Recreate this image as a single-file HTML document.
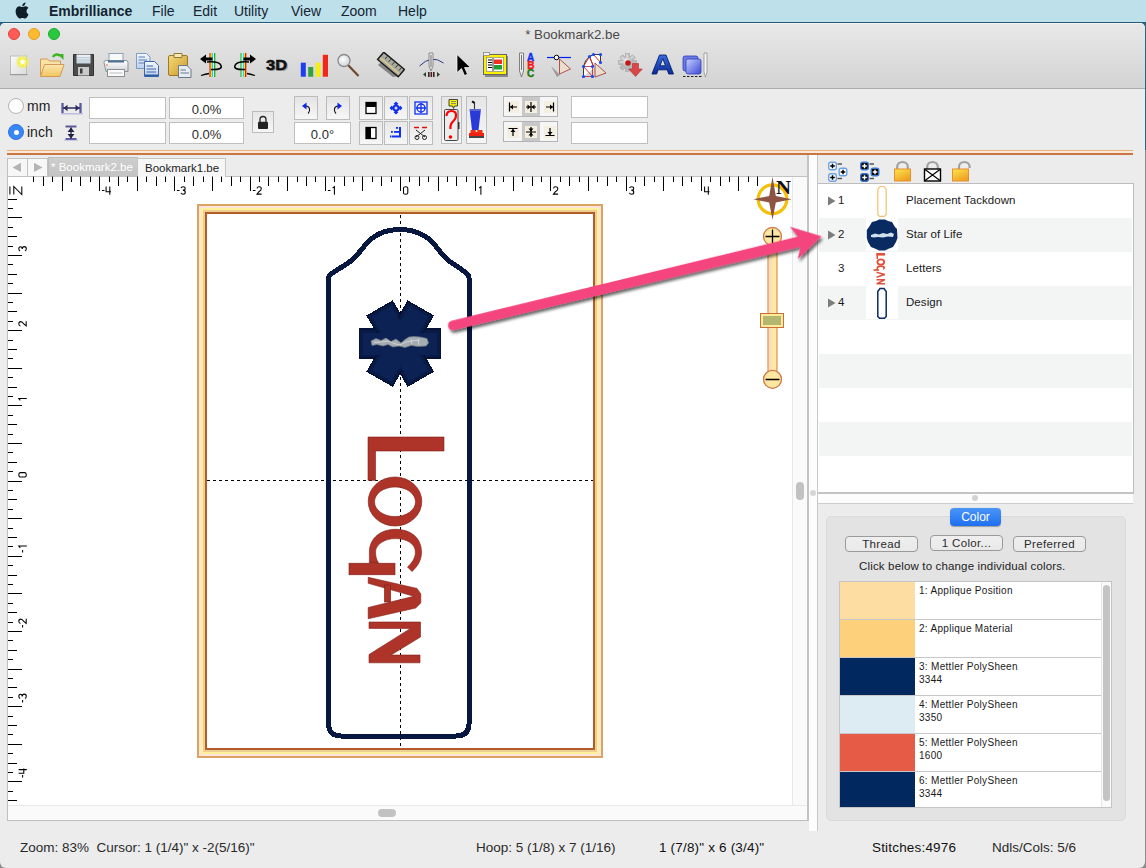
<!DOCTYPE html>
<html><head><meta charset="utf-8">
<style>
*{box-sizing:border-box}
html,body{margin:0;padding:0}
body{width:1146px;height:868px;position:relative;overflow:hidden;background:linear-gradient(#2a6585 0,#2a6585 150px,#8c8c8c 150px);font-family:"Liberation Sans", sans-serif;}
.a{position:absolute}
.t{position:absolute;white-space:nowrap}
.menubar{position:absolute;left:0;top:0;width:1146px;height:23px;background:#bde0eb;border-bottom:1px solid #235a76}
.menubar span{position:absolute;top:3px;font-size:14px;color:#142430}
.win{position:absolute;left:0;top:23px;width:1145px;height:845px;background:#ececec;border-radius:5px 5px 6px 6px;overflow:hidden}
.inp{position:absolute;background:#fff;border:1px solid #bfbfbf;font-size:14px;color:#2a2a2a;text-align:center;line-height:19px}
.btn{position:absolute;background:linear-gradient(#f8f8f8,#ececec);border:1px solid #bcbcbc}
.pbtn{position:absolute;height:16px;background:linear-gradient(#efefef,#e9e9e9);border:1px solid #9a9a9a;border-radius:4px;font-size:11.5px;letter-spacing:0.35px;color:#2a2a2a;text-align:center;line-height:15px}
</style></head><body>
<div class="menubar"><svg class="a" style="left:15px;top:2px" width="14" height="17" viewBox="0 0 14 17"><path fill="#0e1e28" d="M11.6 9.1c0-2.1 1.7-3.100 1.800-3.200-1-1.400-2.500-1.600-3-1.600-1.300-.1-2.500.8-3.100.8-.7 0-1.600-.8-2.700-.8C3.300 4.300 2 5.100 1.300 6.400c-1.400 2.500-.4 6.200 1 8.200.7 1 1.500 2.100 2.500 2 1-.04 1.400-.6 2.600-.6s1.500.6 2.600.6c1.100 0 1.700-1 2.400-2 .8-1.100 1.100-2.200 1.100-2.300-.03 0-2.100-.8-2.100-3.300zM9.600 3c.6-.7 1-1.600.9-2.600-.8.04-1.800.6-2.400 1.300-.5.600-1 1.500-.9 2.500 1 .08 1.800-.5 2.400-1.200z"/></svg><span style="left:49px;font-weight:bold;">Embrilliance</span><span style="left:152px;">File</span><span style="left:193px;">Edit</span><span style="left:234px;">Utility</span><span style="left:291px;">View</span><span style="left:341px;">Zoom</span><span style="left:398px;">Help</span></div><div class="win"><div class="a" style="left:0;top:0;width:1145px;height:66px;background:linear-gradient(#e8e8e8,#d3d3d3);border-bottom:1px solid #acacac;border-top:1px solid #f4f4f4"></div><div class="a" style="left:8px;top:5px;width:12px;height:12px;border-radius:50%;background:#fd5d56;border:1px solid #e0443e"></div><div class="a" style="left:28px;top:5px;width:12px;height:12px;border-radius:50%;background:#febb2f;border:1px solid #df9f26"></div><div class="a" style="left:48px;top:5px;width:12px;height:12px;border-radius:50%;background:#2bc83f;border:1px solid #1dab2b"></div><div class="t" style="left:0;width:1145px;text-align:center;top:4px;font-size:13.3px;color:#4a4a4a">* Bookmark2.be</div></div><svg class="a" style="left:8px;top:52px" width="24" height="26" viewBox="0 0 24 26"><defs><radialGradient id="glow"><stop offset="0" stop-color="#ffff40"/><stop offset="0.55" stop-color="#f4ec40" stop-opacity="0.95"/><stop offset="1" stop-color="#f0f080" stop-opacity="0"/></radialGradient>
<linearGradient id="docg" x1="0" y1="0" x2="1" y2="1"><stop offset="0" stop-color="#fafafa"/><stop offset="1" stop-color="#dcdcdc"/></linearGradient></defs>
<rect x="2.5" y="4" width="16" height="18.5" fill="url(#docg)" stroke="#bdbdbd" stroke-width="1"/>
<rect x="2" y="22" width="17.5" height="1.2" fill="#999"/>
<circle cx="14.6" cy="10" r="7.5" fill="url(#glow)"/>
<path d="M14.6 6.2l1.1 2.4 2.5.3-1.9 1.7.5 2.5-2.2-1.3-2.2 1.3.5-2.5-1.9-1.700 2.500-.3z" fill="#fff"/></svg><svg class="a" style="left:38px;top:51px" width="28" height="27" viewBox="0 0 28 27"><defs><linearGradient id="fold" x1="0" y1="0" x2="0" y2="1"><stop offset="0" stop-color="#fbe6ae"/><stop offset="1" stop-color="#f1c660"/></linearGradient></defs>
<path d="M2.5 8h7l2 2h11v14h-20z" fill="#f9e2a6" stroke="#d49a55" stroke-width="1"/>
<path d="M6.500 13.500h19.500l-4 12h-19.500z" fill="url(#fold)" stroke="#d49a55" stroke-width="1"/>
<path d="M15 6c1.500-3 5-3.500 7-1" fill="none" stroke="#3cb521" stroke-width="2.5"/>
<path d="M19.500 3h6v6z" fill="#3cb521"/></svg><svg class="a" style="left:72px;top:53px" width="24" height="24" viewBox="0 0 24 24"><defs><linearGradient id="flop" x1="0" y1="0" x2="0" y2="1"><stop offset="0" stop-color="#eef3f7"/><stop offset="1" stop-color="#c7d3dd"/></linearGradient></defs>
<path d="M1.5 1.500h20v21h-20z" fill="#4c4c4c" stroke="#303030" stroke-width="1"/>
<rect x="4.500" y="1.500" width="14" height="9" fill="url(#flop)"/>
<line x1="5" y1="4.500" x2="18" y2="4.500" stroke="#b8c6d2" stroke-width="0.8"/><line x1="5" y1="7" x2="18" y2="7" stroke="#b8c6d2" stroke-width="0.8"/>
<rect x="6" y="14" width="11" height="8.500" fill="#c9c9c9"/><rect x="8" y="15.500" width="2.500" height="5" fill="#3a3a3a"/></svg><svg class="a" style="left:102px;top:52px" width="28" height="26" viewBox="0 0 28 26"><defs><linearGradient id="prn" x1="0" y1="0" x2="0" y2="1"><stop offset="0" stop-color="#ffffff"/><stop offset="1" stop-color="#cfd3d6"/></linearGradient></defs>
<rect x="7" y="1.500" width="14" height="8" fill="#f6f8fa" stroke="#8ea2b4" stroke-width="1"/>
<path d="M2 10.500q0-2 2-2h20q2 0 2 2v9h-22z" fill="url(#prn)" stroke="#8a9096" stroke-width="1"/>
<rect x="6" y="8.500" width="16" height="2" fill="#4c6f94"/>
<rect x="5.500" y="17.500" width="17" height="7" fill="#fafafa" stroke="#8a9096" stroke-width="1"/>
<line x1="7.500" y1="21" x2="20.500" y2="21" stroke="#9aa" stroke-width="0.7"/><circle cx="5" cy="13" r="0.8" fill="#f06020"/></svg><svg class="a" style="left:135px;top:52px" width="27" height="26" viewBox="0 0 27 26"><defs><linearGradient id="cpy" x1="0" y1="0" x2="0" y2="1"><stop offset="0" stop-color="#f4f8fd"/><stop offset="1" stop-color="#bcd0ea"/></linearGradient></defs>
<path d="M1.500 1.500h10l3.500 3.500v11.500h-13.500z" fill="url(#cpy)" stroke="#7c9cc8" stroke-width="1"/>
<line x1="3.500" y1="5" x2="10" y2="5" stroke="#5a7fb5"/><line x1="3.500" y1="8" x2="12" y2="8" stroke="#5a7fb5"/><line x1="3.500" y1="11" x2="12" y2="11" stroke="#5a7fb5"/>
<path d="M9.500 9.500h10l4 4v11h-14z" fill="url(#cpy)" stroke="#3d68b0" stroke-width="1"/>
<line x1="11.500" y1="14" x2="18" y2="14" stroke="#3c65ad"/><line x1="11.500" y1="17" x2="21" y2="17" stroke="#3c65ad"/><line x1="11.500" y1="20" x2="21" y2="20" stroke="#3c65ad"/><rect x="9.500" y="22.500" width="14" height="2" fill="#2e5aa6"/></svg><svg class="a" style="left:167px;top:52px" width="27" height="26" viewBox="0 0 27 26"><defs><linearGradient id="clip" x1="0" y1="0" x2="1" y2="1"><stop offset="0" stop-color="#f7dc7a"/><stop offset="1" stop-color="#c8962a"/></linearGradient></defs>
<rect x="1.500" y="3.500" width="19" height="20" rx="1.500" fill="url(#clip)" stroke="#9c7a2a" stroke-width="1"/>
<path d="M7 1.500h8v4h-8z" fill="#f6eab0" stroke="#8e7a3a" stroke-width="1"/>
<path d="M11.500 13.500h8.500l4 4v8h-12.500z" fill="#e6ecf2" stroke="#6a7888" stroke-width="1"/>
<line x1="13.500" y1="18" x2="19" y2="18" stroke="#6a7a8a"/><line x1="13.500" y1="21" x2="22" y2="21" stroke="#6a7a8a"/></svg><svg class="a" style="left:199px;top:52px" width="26" height="26" viewBox="0 0 26 26"><rect x="10.500" y="1" width="1.200" height="24" fill="#e00"/><rect x="11.700" y="1" width="1.200" height="24" fill="#ee0"/><rect x="12.900" y="1" width="1.200" height="24" fill="#0dd"/><rect x="14.100" y="1" width="1" height="24" fill="#fff"/><rect x="15.100" y="1" width="1.200" height="24" fill="#1a1"/>
<path d="M1 7l6-4.500v3h6.500v3h-6.500v3z" fill="#000"/>
<path d="M8 10q12-1 14 3.500t-10 4" fill="none" stroke="#000" stroke-width="1.600"/>
<path d="M2 23.500q5-1.500 8-2" fill="none" stroke="#000" stroke-width="1.300"/></svg><svg class="a" style="left:231px;top:52px" width="26" height="26" viewBox="0 0 26 26"><rect x="9.500" y="1" width="1.200" height="24" fill="#1a1"/><rect x="10.700" y="1" width="1" height="24" fill="#fff"/><rect x="11.700" y="1" width="1.200" height="24" fill="#0dd"/><rect x="12.900" y="1" width="1.200" height="24" fill="#ee0"/><rect x="14.100" y="1" width="1.200" height="24" fill="#e00"/>
<path d="M25 7l-6-4.500v3h-6.500v3h6.500v3z" fill="#000"/>
<path d="M18 10q-12-1-14 3.500t10 4" fill="none" stroke="#000" stroke-width="1.600"/>
<path d="M24 23.500q-5-1.500-8-2" fill="none" stroke="#000" stroke-width="1.300"/></svg><svg class="a" style="left:264px;top:54px" width="28" height="20" viewBox="0 0 28 20"><text x="3.300" y="17.300" font-family="Liberation Sans" font-weight="bold" font-size="15" fill="#9a9a9a" textLength="21" lengthAdjust="spacingAndGlyphs">3D</text><text x="2" y="16" font-family="Liberation Sans" font-weight="bold" font-size="15" fill="#111" stroke="#111" stroke-width="0.500" textLength="21" lengthAdjust="spacingAndGlyphs">3D</text></svg><svg class="a" style="left:299px;top:53px" width="31" height="25" viewBox="0 0 31 25"><rect x="1.800" y="9.700" width="5" height="14" fill="#1e3ef0"/><rect x="9.200" y="14" width="5" height="9.700" fill="#33a040"/><rect x="16.600" y="9.700" width="5" height="14" fill="#f4ee10"/><rect x="23.800" y="1.800" width="5.200" height="21.900" fill="#f02818"/></svg><svg class="a" style="left:336px;top:52px" width="26" height="26" viewBox="0 0 26 26"><defs><radialGradient id="lens" cx="0.4" cy="0.4"><stop offset="0" stop-color="#fff"/><stop offset="1" stop-color="#d8dde0"/></radialGradient></defs>
<line x1="12" y1="13" x2="22.500" y2="24" stroke="#6a4a2a" stroke-width="2.200"/>
<circle cx="8" cy="8.500" r="6" fill="url(#lens)" stroke="#8a8a8a" stroke-width="1.300"/></svg><svg class="a" style="left:375px;top:52px" width="30" height="26" viewBox="0 0 30 26"><path d="M3 13 L7 9 L24 24 L18 25 Z" fill="#6a6a6a" opacity="0.75"/>
<g transform="translate(16,12.500) rotate(40)"><rect x="-13.500" y="-4.800" width="27" height="9.600" fill="#a9a9a0" stroke="#1a1a1a" stroke-width="1.400"/><line x1="-12.500" y1="1.800" x2="12.500" y2="1.800" stroke="#e0cc88" stroke-width="1.300"/>
<line x1="-8" y1="-4" x2="-8" y2="-0.500" stroke="#333" stroke-width="0.900"/><line x1="-3.500" y1="-4" x2="-3.500" y2="-0.500" stroke="#333" stroke-width="0.900"/><line x1="1" y1="-4" x2="1" y2="-0.500" stroke="#333" stroke-width="0.900"/><line x1="5.500" y1="-4" x2="5.500" y2="-0.500" stroke="#333" stroke-width="0.900"/><line x1="10" y1="-4" x2="10" y2="-0.500" stroke="#333" stroke-width="0.900"/></g></svg><svg class="a" style="left:418px;top:52px" width="27" height="26" viewBox="0 0 27 26"><path d="M1.500 14q12-12 24-3" fill="none" stroke="#2a3a8a" stroke-width="1"/>
<path d="M11 1v13l2 5 2-5v-13z" fill="#e8e8e8" stroke="#777" stroke-width="0.800"/><line x1="13" y1="3" x2="13" y2="15" stroke="#555" stroke-width="0.800"/>
<path d="M5 22.500l3-2.500v5z" fill="#234a23"/><path d="M22 22.500l-3-2.500v5z" fill="#234a23"/><rect x="10" y="20" width="1.600" height="5" fill="#4a2020"/><rect x="12.500" y="20" width="1.600" height="5" fill="#4a2020"/><rect x="15" y="20" width="1.600" height="5" fill="#4a2020"/></svg><svg class="a" style="left:455px;top:53px" width="17" height="24" viewBox="0 0 17 24"><path d="M2 1.500v18l4.500-4 3 7 3-1.300-3-6.700h6z" fill="#000" stroke="#fff" stroke-width="0.700"/></svg><svg class="a" style="left:482px;top:52px" width="27" height="26" viewBox="0 0 27 26"><rect x="3" y="4" width="23" height="21" fill="#888"/><rect x="1.500" y="2.500" width="23" height="20" fill="#fff000" stroke="#666" stroke-width="1"/><rect x="1.500" y="0.500" width="6" height="3" fill="#f4f4f4" stroke="#888" stroke-width="0.800"/>
<rect x="4.500" y="5.500" width="17" height="14" fill="#fff" stroke="#777" stroke-width="0.600"/><rect x="12" y="7.500" width="8" height="4.500" fill="#f03020"/><rect x="12" y="13" width="8" height="4.500" fill="#20a030"/>
<line x1="6" y1="8" x2="10" y2="8" stroke="#000"/><line x1="6" y1="10.500" x2="10" y2="10.500" stroke="#000"/><line x1="6" y1="13" x2="10" y2="13" stroke="#000"/><line x1="6" y1="15.500" x2="10" y2="15.500" stroke="#000"/><line x1="11" y1="6" x2="11" y2="19" stroke="#333"/></svg><svg class="a" style="left:517px;top:52px" width="21" height="26" viewBox="0 0 21 26"><path d="M2.500 1v18l2 6 2-6v-18z" fill="#eee" stroke="#666" stroke-width="0.800"/><line x1="4.500" y1="3" x2="4.500" y2="18" stroke="#555" stroke-width="0.800"/>
<text x="10" y="8.600" font-family="Liberation Sans" font-weight="bold" font-size="10" fill="#1030f0" stroke="#1030f0" stroke-width="0.400">A</text><text x="10.300" y="16.600" font-family="Liberation Sans" font-weight="bold" font-size="10" fill="#f01818" stroke="#f01818" stroke-width="0.400">B</text><text x="10" y="24.800" font-family="Liberation Sans" font-weight="bold" font-size="10" fill="#2a7a10" stroke="#2a7a10" stroke-width="0.400">C</text></svg><svg class="a" style="left:545px;top:52px" width="28" height="26" viewBox="0 0 28 26"><path d="M6 14l6 11 3-2z" fill="#999"/><line x1="2" y1="5.500" x2="26" y2="5.500" stroke="#0020f0" stroke-width="1.200"/><circle cx="11.500" cy="5.500" r="2.300" fill="#fff" stroke="#000" stroke-width="1"/>
<path d="M14.500 7l11 10-11 5z" fill="#eadfcc" stroke="#b04040" stroke-width="0.900"/></svg><svg class="a" style="left:581px;top:52px" width="28" height="26" viewBox="0 0 28 26"><path d="M2.500 24.500v-10q1-6 6-10l4-2h7v8" fill="#fff" stroke="#222" stroke-width="0.900"/>
<path d="M2.500 24.500h9v-10h-9" fill="none" stroke="#c02020" stroke-width="0.800"/><path d="M2.500 14.500l9 10M2.500 14.500l6-10 4 10M12.500 2.500l7 8M8.500 4.500l4 10" fill="none" stroke="#c02020" stroke-width="0.900"/>
<path d="M14 11l11 10-11 4z" fill="#eadfcc" stroke="#a04040" stroke-width="0.900"/>
<g fill="#1a4af0"><circle cx="2.500" cy="24.500" r="1.600"/><circle cx="11.500" cy="24.500" r="1.600"/><circle cx="2.500" cy="14.500" r="1.600"/><circle cx="11.500" cy="14.500" r="1.600"/><circle cx="8.500" cy="4.500" r="1.600"/><circle cx="12.500" cy="2.500" r="1.600"/><circle cx="19.500" cy="2.500" r="1.600"/><circle cx="19.500" cy="10.500" r="1.600"/></g></svg><svg class="a" style="left:618px;top:53px" width="26" height="24" viewBox="0 0 26 24"><defs><radialGradient id="gear" cx="0.400" cy="0.350"><stop offset="0" stop-color="#f4f4f4"/><stop offset="1" stop-color="#b8b8b8"/></radialGradient></defs><g transform="translate(9.500,9.500)"><g fill="url(#gear)" stroke="#a8a8a8" stroke-width="0.600"><circle r="6.500"/><rect x="-2" y="-9" width="4" height="18"/><rect x="-9" y="-2" width="18" height="4"/><rect x="-2" y="-9" width="4" height="18" transform="rotate(45)"/><rect x="-2" y="-9" width="4" height="18" transform="rotate(-45)"/></g><circle r="5.500" fill="url(#gear)"/><circle r="2.800" cx="0.500" cy="0.500" fill="#c01818"/></g>
<path d="M14.500 10.500h6v5.500h3.800l-6.800 7.500-6.800-7.500h3.800z" fill="#d84848" stroke="#b03030" stroke-width="0.600"/></svg><svg class="a" style="left:650px;top:53px" width="26" height="23" viewBox="0 0 26 23"><defs><linearGradient id="ag" x1="0" y1="0" x2="0" y2="1"><stop offset="0" stop-color="#3a6ae0"/><stop offset="1" stop-color="#0a2a98"/></linearGradient></defs><path d="M9.500 2h6.500l7.500 19h-4.800l-1.500-4.200h-9l-1.500 4.200h-4.800zM10 12.800h5.500l-2.700-7.300z" fill="url(#ag)" stroke="#06226a" stroke-width="0.900" fill-rule="evenodd"/></svg><svg class="a" style="left:681px;top:52px" width="28" height="26" viewBox="0 0 28 26"><defs><linearGradient id="bsq" x1="0" y1="0" x2="1" y2="1"><stop offset="0" stop-color="#c8d0ff"/><stop offset="1" stop-color="#3a4ad8"/></linearGradient></defs>
<rect x="2" y="4" width="15" height="15" rx="2" fill="#6a7ae8" stroke="#3040b0" stroke-width="0.800"/><rect x="5" y="7" width="15" height="15" rx="2" fill="url(#bsq)" stroke="#3040b0" stroke-width="0.800"/>
<line x1="2" y1="24.500" x2="21" y2="24.500" stroke="#222" stroke-width="1" stroke-dasharray="2.500 1.500"/>
<path d="M23 1v19l1.500 5 1.500-5v-19z" fill="#f4f4f4" stroke="#888" stroke-width="0.700"/></svg><div class="a" style="left:8px;top:98px;width:16px;height:16px;border-radius:50%;background:#fff;border:1px solid #b4b4b4"></div><div class="t" style="left:27px;top:98px;font-size:14px;color:#222">mm</div><div class="a" style="left:8px;top:124px;width:16px;height:16px;border-radius:50%;background:#3a86f6;border:1px solid #2f74e0"></div><div class="a" style="left:13.5px;top:129.5px;width:5px;height:5px;border-radius:50%;background:#fff"></div><div class="t" style="left:27px;top:124px;font-size:14px;color:#222">inch</div><svg class="a" style="left:60px;top:101px" width="23" height="14" viewBox="0 0 23 14"><path d="M2.500 2v10M20.500 2v10" stroke="#5a5a9a" stroke-width="2.300"/><path d="M3 7h17" stroke="#2c2c5a" stroke-width="1.500"/><path d="M3.500 7l4-3.200v6.400z M19.500 7l-4-3.200v6.400z" fill="#2c2c5a"/><path d="M1 12.800h22" stroke="#8a8ad0" stroke-width="1.200" opacity="0.6"/></svg><svg class="a" style="left:63px;top:125px" width="16" height="16" viewBox="0 0 16 16"><path d="M2.500 1.500h11M2.500 14h11" stroke="#5a5a9a" stroke-width="2"/><path d="M8 2.500v11" stroke="#222244" stroke-width="1.300"/><path d="M8 2.500l-3.500 4.500h7z M8 13.500l-3.500-4.500h7z" fill="#222244"/><path d="M1 15.200h14" stroke="#9a9ad8" stroke-width="1" opacity="0.6"/></svg><div class="inp" style="left:89px;top:97px;width:77px;height:22px"></div><div class="inp" style="left:89px;top:122px;width:77px;height:22px"></div><div class="inp" style="left:169px;top:97px;width:75px;height:22px"></div><div class="inp" style="left:169px;top:122px;width:75px;height:22px"></div><div class="t" style="left:169px;top:102px;width:75px;text-align:center;font-size:13px;color:#2b2b2b">0.0%</div><div class="t" style="left:169px;top:127px;width:75px;text-align:center;font-size:13px;color:#2b2b2b">0.0%</div><div class="btn" style="left:252px;top:111px;width:22px;height:22px;background:linear-gradient(#e6e6e6,#f6f6f6)"></div><svg class="a" style="left:256px;top:113px" width="14" height="18" viewBox="0 0 14 18"><path d="M4 9V6.500a3 3 0 0 1 6 0V9" fill="none" stroke="#222" stroke-width="1.300"/><rect x="2" y="8.700" width="10" height="7.300" rx="1" fill="#222"/></svg><div class="btn" style="left:294px;top:96px;width:24px;height:24px;background:linear-gradient(#e4e4e4,#f7f7f7)"></div><div class="btn" style="left:326px;top:96px;width:24px;height:24px;background:linear-gradient(#e4e4e4,#f7f7f7)"></div><svg class="a" style="left:300px;top:100px" width="12" height="16" viewBox="0 0 12 16"><path d="M2 6 L6.500 2.500 V9.500z" fill="#0a28f0"/><path d="M6 6q4 .5 3.500 4.500q-.3 1.800-1.500 3" fill="none" stroke="#111" stroke-width="1.100"/></svg><svg class="a" style="left:332px;top:100px" width="12" height="16" viewBox="0 0 12 16"><path d="M10 6 L5.500 2.500 V9.500z" fill="#0a28f0"/><path d="M6 6q-4 .5-3.500 4.500q.3 1.800 1.500 3" fill="none" stroke="#111" stroke-width="1.100"/></svg><div class="inp" style="left:294px;top:122px;width:57px;height:22px"></div><div class="t" style="left:294px;top:127px;width:57px;text-align:center;font-size:13px;color:#2b2b2b">0.0°</div><div class="btn" style="left:359px;top:96px;width:24px;height:24px;background:linear-gradient(#e8e8e8,#f6f6f6)"></div><div class="btn" style="left:359px;top:121px;width:24px;height:24px;background:linear-gradient(#e8e8e8,#f6f6f6)"></div><div class="btn" style="left:384px;top:96px;width:24px;height:24px;background:linear-gradient(#e8e8e8,#f6f6f6)"></div><div class="btn" style="left:384px;top:121px;width:24px;height:24px;background:linear-gradient(#e8e8e8,#f6f6f6)"></div><div class="btn" style="left:409px;top:96px;width:24px;height:24px;background:linear-gradient(#e8e8e8,#f6f6f6)"></div><div class="btn" style="left:409px;top:121px;width:24px;height:24px;background:linear-gradient(#e8e8e8,#f6f6f6)"></div><svg class="a" style="left:359px;top:96px" width="24" height="24" viewBox="0 0 24 24"><rect x="7" y="6.500" width="10" height="11" fill="#fff" stroke="#000" stroke-width="1.300"/><rect x="7" y="6.500" width="10" height="4.500" fill="#000"/></svg><svg class="a" style="left:359px;top:121px" width="24" height="24" viewBox="0 0 24 24"><rect x="7" y="6.500" width="10" height="11" fill="#fff" stroke="#000" stroke-width="1.300"/><rect x="7" y="6.500" width="5" height="11" fill="#000"/></svg><svg class="a" style="left:384px;top:96px" width="24" height="24" viewBox="0 0 24 24"><g fill="#1030f0"><circle cx="12" cy="12" r="3.500"/><path d="M12 5.500l-2.500 2.500h5z M12 18.500l-2.500-2.500h5z M5.500 12l2.500-2.500v5z M18.500 12l-2.500-2.500v5z"/><rect x="10.500" y="7" width="3" height="10"/><rect x="7" y="10.500" width="10" height="3"/></g><circle cx="12" cy="12" r="1.500" fill="#dde"/></svg><svg class="a" style="left:384px;top:121px" width="24" height="24" viewBox="0 0 24 24"><g fill="#1030f0"><rect x="15" y="6" width="2" height="10"/><rect x="8" y="14.500" width="9" height="2"/><rect x="10" y="10" width="5" height="1.800"/><rect x="6" y="14.500" width="1.500" height="2"/><rect x="7" y="10" width="1.800" height="1.800"/><rect x="12" y="6" width="2" height="1.800"/></g></svg><svg class="a" style="left:409px;top:96px" width="24" height="24" viewBox="0 0 24 24"><rect x="6" y="6" width="12" height="12" fill="none" stroke="#1030f0" stroke-width="1.300"/><circle cx="12" cy="12" r="4" fill="none" stroke="#1030f0" stroke-width="1.300"/><path d="M12 7v10M7 12h10" stroke="#1030f0" stroke-width="1.300"/></svg><svg class="a" style="left:409px;top:121px" width="24" height="24" viewBox="0 0 24 24"><path d="M5 6.500h5M13 6.500h5" stroke="#e01010" stroke-width="1.500"/><path d="M7 9l9 7M16 9l-9 7" stroke="#222" stroke-width="1"/><circle cx="8" cy="16.500" r="2" fill="none" stroke="#222" stroke-width="1"/><circle cx="15.500" cy="16.500" r="2" fill="none" stroke="#222" stroke-width="1"/></svg><div class="btn" style="left:441px;top:96px;width:21px;height:48px;background:linear-gradient(#e6e6e6,#f6f6f6)"></div><div class="btn" style="left:466px;top:96px;width:21px;height:48px;background:linear-gradient(#e6e6e6,#f6f6f6)"></div><svg class="a" style="left:441px;top:96px" width="21" height="48" viewBox="0 0 21 48"><rect x="3.500" y="13.500" width="13.500" height="31" rx="1.200" fill="#ececec" stroke="#444" stroke-width="1"/><rect x="17" y="26" width="1.500" height="7" fill="#333"/><path d="M8 3.500h8.500v6.500h-3l-1 2.500-1-2.500h-3.500z" fill="#f4f000" stroke="#333" stroke-width="0.900"/><path d="M10 5.500h5M10 7.500h5" stroke="#777" stroke-width="0.800"/><path d="M5.500 20q0-5 5-5t4.500 5q0 3-3 5.500t-2.500 7.500" fill="none" stroke="#f00" stroke-width="2.200"/><circle cx="9.500" cy="41" r="1.800" fill="#f00"/></svg><svg class="a" style="left:466px;top:96px" width="21" height="48" viewBox="0 0 21 48"><path d="M6.500 5l2 1.500v28" fill="none" stroke="#333" stroke-width="1.100"/><path d="M6 5.500l2.500 1.500" stroke="#111" stroke-width="2"/><path d="M3.500 13h11.500l-2.500 21h-6.500z" fill="#2a3ad8"/><path d="M4 14h11" stroke="#bbb" stroke-width="0.700"/><rect x="4.500" y="34" width="12" height="3" fill="#f03010"/><rect x="3" y="37" width="15" height="3" fill="#f02010"/><rect x="3" y="40" width="15" height="2" fill="#444"/><circle cx="10.500" cy="35" r="1" fill="#fff"/></svg><div class="a" style="left:503px;top:96px;width:55px;height:21px;border:1px solid #b4b4b4;background:#f6f6f6"></div><div class="a" style="left:522px;top:97px;width:18px;height:19px;background:#c8c8c8"></div><div class="a" style="left:503px;top:121px;width:55px;height:21px;border:1px solid #b4b4b4;background:#f6f6f6"></div><div class="a" style="left:522px;top:122px;width:18px;height:19px;background:#c8c8c8"></div><svg class="a" style="left:507px;top:101px" width="12" height="12" viewBox="0 0 12 12"><rect x="0" y="0" width="12" height="12" fill="#f4efe0"/><path d="M2.500 1.500v9M3 6h7" stroke="#000" stroke-width="1.200"/><path d="M3 6l3-2.500v5z" fill="#000"/></svg><svg class="a" style="left:525px;top:101px" width="12" height="12" viewBox="0 0 12 12"><rect x="0" y="0" width="12" height="12" fill="#f4efe0"/><path d="M6 1v10M1 6h10" stroke="#000" stroke-width="1.200"/><path d="M5.500 6l-3-2.500v5zM6.500 6l3-2.500v5z" fill="#000"/></svg><svg class="a" style="left:544px;top:101px" width="12" height="12" viewBox="0 0 12 12"><rect x="0" y="0" width="12" height="12" fill="#f4efe0"/><path d="M9.500 1.500v9M2 6h7" stroke="#000" stroke-width="1.200"/><path d="M9 6l-3-2.500v5z" fill="#000"/></svg><svg class="a" style="left:507px;top:126px" width="12" height="12" viewBox="0 0 12 12"><rect x="0" y="0" width="12" height="12" fill="#f4efe0"/><path d="M1.500 2.500h9M6 3v7" stroke="#000" stroke-width="1.200"/><path d="M6 3l-2.500 3h5z" fill="#000"/></svg><svg class="a" style="left:525px;top:126px" width="12" height="12" viewBox="0 0 12 12"><rect x="0" y="0" width="12" height="12" fill="#f4efe0"/><path d="M1 6h10M6 1v10" stroke="#000" stroke-width="1.200"/><path d="M6 5.500l-2.500-3h5zM6 6.500l-2.500 3h5z" fill="#000"/></svg><svg class="a" style="left:544px;top:126px" width="12" height="12" viewBox="0 0 12 12"><rect x="0" y="0" width="12" height="12" fill="#f4efe0"/><path d="M1.500 9.500h9M6 2v7" stroke="#000" stroke-width="1.200"/><path d="M6 9l-2.500-3h5z" fill="#000"/></svg><div class="inp" style="left:571px;top:96px;width:77px;height:22px"></div><div class="inp" style="left:571px;top:122px;width:77px;height:22px"></div><div class="a" style="left:7px;top:150px;width:1126px;height:5px;background:linear-gradient(#e9b27a 0,#e9b27a 1.5px,#fde8d8 1.5px,#fde8d8 3px,#c97645 3px,#c97645 5px)"></div><div class="a" style="left:7px;top:176px;width:802px;height:645px;border:1px solid #bfbfbf;border-right:2px solid #c4c4c4;background:#fff"></div><div class="a" style="left:807px;top:155px;width:2px;height:22px;background:#c4c4c4"></div><div class="a" style="left:7px;top:176px;width:802px;height:1px;background:#c2c2c2"></div><div class="a" style="left:7px;top:158px;width:21px;height:19px;background:#f7f7f7;border:1px solid #c2c2c2"></div><div class="a" style="left:27px;top:158px;width:21px;height:19px;background:#f7f7f7;border:1px solid #c2c2c2"></div><svg class="a" style="left:7px;top:158px" width="41" height="19" viewBox="0 0 41 19"><path d="M5.500 9.400l8.500-4.600v9.200z" fill="#b4b4b4"/><path d="M35.500 9.400l-8.500-4.600v9.200z" fill="#b4b4b4"/></svg><div class="a" style="left:48px;top:157px;width:90px;height:20px;background:linear-gradient(#cecece,#c3c3c3);border:1px solid #bcbcbc;border-bottom:none"></div><div class="t" style="left:51px;top:161px;font-size:11.5px;color:#fff">* Bookmark2.be</div><div class="a" style="left:137px;top:158px;width:89px;height:19px;background:#f6f6f6;border:1px solid #c6c6c6;border-bottom:none"></div><div class="t" style="left:145px;top:162px;font-size:11.5px;color:#222">Bookmark1.be</div><div class="a" style="left:792px;top:177px;width:15px;height:628px;background:#fafafa;border-left:1px solid #e8e8e8"></div><div class="a" style="left:796px;top:482px;width:8px;height:18px;border-radius:4px;background:#c2c2c2"></div><div class="a" style="left:8px;top:805px;width:799px;height:15px;background:#fafafa;border-top:1px solid #e8e8e8"></div><div class="a" style="left:378px;top:809px;width:18px;height:8px;border-radius:4px;background:#c2c2c2"></div><svg width="786" height="21" style="position:absolute;left:7px;top:176px" viewBox="7 176 786 21"><g fill="none" stroke="#000" stroke-width="1.050"><path d="M33.5 176.500 V182"/><path d="M43.5 176.500 V186"/><path d="M52.5 176.500 V182"/><path d="M62.5 176.500 V191"/><path d="M71.5 176.500 V182"/><path d="M80.5 176.500 V186"/><path d="M90.5 176.500 V182"/><path d="M99.5 176.500 V191"/><g transform="translate(101.9,186.200)"><path transform="translate(0,0)" d="M0 4.300 H2.600"/><path transform="translate(3.5,0)" d="M0.700 0.300 V5.500 H5.600 M4.400 0.300 V8.500"/></g><path d="M109.5 176.500 V182"/><path d="M118.5 176.500 V186"/><path d="M127.5 176.500 V182"/><path d="M137.5 176.500 V191"/><path d="M146.5 176.500 V182"/><path d="M156.5 176.500 V186"/><path d="M165.5 176.500 V182"/><path d="M174.5 176.500 V191"/><g transform="translate(176.9,186.200)"><path transform="translate(0,0)" d="M0 4.300 H2.600"/><path transform="translate(3.5,0)" d="M0.600 1.800 Q1 0.500 2.700 0.500 Q4.800 0.500 4.800 2.200 Q4.800 3.900 2.400 3.900 Q4.900 3.900 4.900 6 Q4.900 8 2.700 8 Q0.900 8 0.500 6.600"/></g><path d="M184.5 176.500 V182"/><path d="M193.5 176.500 V186"/><path d="M203.5 176.500 V182"/><path d="M212.5 176.500 V191"/><path d="M221.5 176.500 V182"/><path d="M231.5 176.500 V186"/><path d="M240.5 176.500 V182"/><path d="M250.5 176.500 V191"/><g transform="translate(252.9,186.200)"><path transform="translate(0,0)" d="M0 4.300 H2.600"/><path transform="translate(3.5,0)" d="M0.600 2.200 Q0.800 0.500 2.750 0.500 Q4.900 0.500 4.900 2.500 Q4.900 4 2.500 5.500 L0.600 7.900 H5.200"/></g><path d="M259.5 176.500 V182"/><path d="M268.5 176.500 V186"/><path d="M278.5 176.500 V182"/><path d="M287.5 176.500 V191"/><path d="M297.5 176.500 V182"/><path d="M306.5 176.500 V186"/><path d="M315.5 176.500 V182"/><path d="M325.5 176.500 V191"/><g transform="translate(327.9,186.200)"><path transform="translate(0,0)" d="M0 4.300 H2.600"/><path transform="translate(3.5,0)" d="M1.200 2 L3 0.500 V8.500"/></g><path d="M334.5 176.500 V182"/><path d="M344.5 176.500 V186"/><path d="M353.5 176.500 V182"/><path d="M362.5 176.500 V191"/><path d="M372.5 176.500 V182"/><path d="M381.5 176.500 V186"/><path d="M391.5 176.500 V182"/><path d="M400.5 176.500 V191"/><g transform="translate(402.9,186.200)"><path transform="translate(0,0)" d="M0.600 2 Q0.600 0.500 2.750 0.500 Q4.900 0.500 4.900 2 V6.500 Q4.900 8 2.750 8 Q0.600 8 0.600 6.500 Z"/></g><path d="M409.5 176.500 V182"/><path d="M419.5 176.500 V186"/><path d="M428.5 176.500 V182"/><path d="M438.5 176.500 V191"/><path d="M447.5 176.500 V182"/><path d="M456.5 176.500 V186"/><path d="M466.5 176.500 V182"/><path d="M475.5 176.500 V191"/><g transform="translate(477.9,186.200)"><path transform="translate(0,0)" d="M1.200 2 L3 0.500 V8.500"/></g><path d="M485.5 176.500 V182"/><path d="M494.5 176.500 V186"/><path d="M503.5 176.500 V182"/><path d="M513.5 176.500 V191"/><path d="M522.5 176.500 V182"/><path d="M532.5 176.500 V186"/><path d="M541.5 176.500 V182"/><path d="M550.5 176.500 V191"/><g transform="translate(552.9,186.200)"><path transform="translate(0,0)" d="M0.600 2.200 Q0.800 0.500 2.750 0.500 Q4.900 0.500 4.900 2.500 Q4.900 4 2.500 5.500 L0.600 7.900 H5.200"/></g><path d="M560.5 176.500 V182"/><path d="M569.5 176.500 V186"/><path d="M579.5 176.500 V182"/><path d="M588.5 176.500 V191"/><path d="M597.5 176.500 V182"/><path d="M607.5 176.500 V186"/><path d="M616.5 176.500 V182"/><path d="M626.5 176.500 V191"/><g transform="translate(628.9,186.200)"><path transform="translate(0,0)" d="M0.600 1.800 Q1 0.500 2.700 0.500 Q4.800 0.500 4.800 2.200 Q4.800 3.900 2.400 3.900 Q4.900 3.900 4.900 6 Q4.900 8 2.700 8 Q0.900 8 0.500 6.600"/></g><path d="M635.5 176.500 V182"/><path d="M644.5 176.500 V186"/><path d="M654.5 176.500 V182"/><path d="M663.5 176.500 V191"/><path d="M673.5 176.500 V182"/><path d="M682.5 176.500 V186"/><path d="M691.5 176.500 V182"/><path d="M701.5 176.500 V191"/><g transform="translate(703.9,186.200)"><path transform="translate(0,0)" d="M0.700 0.300 V5.500 H5.600 M4.400 0.300 V8.500"/></g><path d="M710.5 176.500 V182"/><path d="M720.5 176.500 V186"/><path d="M729.5 176.500 V182"/><path d="M738.5 176.500 V191"/><path d="M748.5 176.500 V182"/><path d="M757.5 176.500 V186"/><path d="M9.900 186.500 V194.500 M13.800 194.500 V186.500 L21.800 194.500 V186.500"/></g></svg><svg width="24" height="608" style="position:absolute;left:7px;top:197px" viewBox="7 197 24 608"><g fill="none" stroke="#000" stroke-width="1.050"><path d="M8 800.5 H17"/><path d="M8 791.5 H13"/><path d="M8 781.5 H22"/><g transform="translate(18.300,777.5) rotate(-90)"><path transform="translate(0,0)" d="M0 4.300 H2.600"/><path transform="translate(3.5,0)" d="M0.700 0.300 V5.500 H5.600 M4.400 0.300 V8.500"/></g><path d="M8 772.5 H13"/><path d="M8 763.5 H17"/><path d="M8 753.5 H13"/><path d="M8 744.5 H22"/><path d="M8 734.5 H13"/><path d="M8 725.5 H17"/><path d="M8 716.5 H13"/><path d="M8 706.5 H22"/><g transform="translate(18.300,702.5) rotate(-90)"><path transform="translate(0,0)" d="M0 4.300 H2.600"/><path transform="translate(3.5,0)" d="M0.600 1.800 Q1 0.500 2.700 0.500 Q4.800 0.500 4.800 2.200 Q4.800 3.900 2.400 3.900 Q4.900 3.900 4.900 6 Q4.900 8 2.700 8 Q0.900 8 0.500 6.600"/></g><path d="M8 697.5 H13"/><path d="M8 687.5 H17"/><path d="M8 678.5 H13"/><path d="M8 669.5 H22"/><path d="M8 659.5 H13"/><path d="M8 650.5 H17"/><path d="M8 640.5 H13"/><path d="M8 631.5 H22"/><g transform="translate(18.300,627.5) rotate(-90)"><path transform="translate(0,0)" d="M0 4.300 H2.600"/><path transform="translate(3.5,0)" d="M0.600 2.200 Q0.800 0.500 2.750 0.500 Q4.900 0.500 4.900 2.500 Q4.900 4 2.500 5.500 L0.600 7.900 H5.200"/></g><path d="M8 622.5 H13"/><path d="M8 612.5 H17"/><path d="M8 603.5 H13"/><path d="M8 593.5 H22"/><path d="M8 584.5 H13"/><path d="M8 575.5 H17"/><path d="M8 565.5 H13"/><path d="M8 556.5 H22"/><g transform="translate(18.300,552.5) rotate(-90)"><path transform="translate(0,0)" d="M0 4.300 H2.600"/><path transform="translate(3.5,0)" d="M1.200 2 L3 0.500 V8.500"/></g><path d="M8 546.5 H13"/><path d="M8 537.5 H17"/><path d="M8 528.5 H13"/><path d="M8 518.5 H22"/><path d="M8 509.5 H13"/><path d="M8 499.5 H17"/><path d="M8 490.5 H13"/><path d="M8 481.5 H22"/><g transform="translate(18.300,477.5) rotate(-90)"><path transform="translate(0,0)" d="M0.600 2 Q0.600 0.500 2.750 0.500 Q4.900 0.500 4.900 2 V6.500 Q4.900 8 2.750 8 Q0.600 8 0.600 6.500 Z"/></g><path d="M8 471.5 H13"/><path d="M8 462.5 H17"/><path d="M8 452.5 H13"/><path d="M8 443.5 H22"/><path d="M8 434.5 H13"/><path d="M8 424.5 H17"/><path d="M8 415.5 H13"/><path d="M8 405.5 H22"/><g transform="translate(18.300,401.5) rotate(-90)"><path transform="translate(0,0)" d="M1.200 2 L3 0.500 V8.500"/></g><path d="M8 396.5 H13"/><path d="M8 387.5 H17"/><path d="M8 377.5 H13"/><path d="M8 368.5 H22"/><path d="M8 358.5 H13"/><path d="M8 349.5 H17"/><path d="M8 340.5 H13"/><path d="M8 330.5 H22"/><g transform="translate(18.300,326.5) rotate(-90)"><path transform="translate(0,0)" d="M0.600 2.200 Q0.800 0.500 2.750 0.500 Q4.900 0.500 4.900 2.500 Q4.900 4 2.500 5.500 L0.600 7.900 H5.200"/></g><path d="M8 321.5 H13"/><path d="M8 311.5 H17"/><path d="M8 302.5 H13"/><path d="M8 293.5 H22"/><path d="M8 283.5 H13"/><path d="M8 274.5 H17"/><path d="M8 264.5 H13"/><path d="M8 255.5 H22"/><g transform="translate(18.300,251.5) rotate(-90)"><path transform="translate(0,0)" d="M0.600 1.800 Q1 0.500 2.700 0.500 Q4.800 0.500 4.800 2.200 Q4.800 3.900 2.400 3.900 Q4.900 3.900 4.900 6 Q4.900 8 2.700 8 Q0.900 8 0.500 6.600"/></g><path d="M8 246.5 H13"/><path d="M8 236.5 H17"/><path d="M8 227.5 H13"/><path d="M8 217.5 H22"/><path d="M8 208.5 H13"/><path d="M8 199.5 H17"/></g></svg><div class="a" style="left:809px;top:155px;width:9px;height:676px;background:#fdfdfd;border-right:1px solid #c8c8c8"></div><div class="a" style="left:810px;top:490px;width:6px;height:6px;border-radius:50%;background:#d6d6d6"></div><div class="a" style="left:197px;top:204px;width:406px;height:554px;border:2px solid #d9a462"></div><div class="a" style="left:199px;top:206px;width:402px;height:550px;border:2px solid #ffe4d9"></div><div class="a" style="left:201px;top:208px;width:398px;height:546px;border:2px solid #fff19c"></div><div class="a" style="left:203px;top:210px;width:394px;height:542px;border:2px solid #eccf92"></div><div class="a" style="left:205px;top:212px;width:390px;height:538px;border:2px solid #b55a2b"></div><svg class="a" style="left:0;top:0" width="1146" height="868" viewBox="0 0 1146 868"><line x1="400.5" y1="215" x2="400.5" y2="748" stroke="#000" stroke-width="1" stroke-dasharray="3 3"/><line x1="207" y1="480.5" x2="593" y2="480.5" stroke="#000" stroke-width="1" stroke-dasharray="3 3"/><path d="M328.400 723 V278.500 Q328.400 275.500 331.300 273.700 C337 270 342 267 348 263 C356 258 360 251 366 244 C374 235 386 229.500 399.800 229.500 C414 229.500 426 235 434 244 C440 251 444 258 452 263 C458 267 463 270 466.500 273.700 Q469.050 275.500 469.050 278.500 V723 Q469.050 736 456 736 H341.400 Q328.400 736 328.400 723 Z" fill="none" stroke="#071740" stroke-width="5" stroke-linejoin="round" shape-rendering="crispEdges"/><g fill="#081b47" stroke="#051236" stroke-width="1.500" shape-rendering="crispEdges"><rect x="-40.500" y="-14.500" width="81" height="29" transform="translate(400.2,343.6) rotate(0)"/><rect x="-40.500" y="-14.500" width="81" height="29" transform="translate(400.2,343.6) rotate(60)"/><rect x="-40.500" y="-14.500" width="81" height="29" transform="translate(400.2,343.6) rotate(120)"/></g><g fill="#0c2154" shape-rendering="crispEdges"><rect x="-37" y="-11" width="74" height="22" transform="translate(400.2,343.6) rotate(0)"/><rect x="-37" y="-11" width="74" height="22" transform="translate(400.2,343.6) rotate(60)"/><rect x="-37" y="-11" width="74" height="22" transform="translate(400.2,343.6) rotate(120)"/></g><path d="M371 341 L376 338.500 L381 340.500 L386 338 L391 341.500 L396 339 L401 343 L405 339.500 L409 337 L414 336.500 L420 337 L427 338.500 L428.500 343 L426 346 L418 346.500 L411 345.500 L405 347.500 L399 346 L393 347 L388 344.500 L383 346 L377 344.500 L372 345.500 Z" fill="#a4acb1" stroke="#6f787e" stroke-width="0.700"/><path d="M374 342.500 L381 342 L388 341 L394 343.500 L400 345 L406 342 L412 341 L420 340 M411 339 L412 344 M418 339 L419 345" fill="none" stroke="#d0d6da" stroke-width="0.900"/><g fill="#ae3329" stroke="#7e2118" stroke-width="0.600"><path d="M368 437 H444 V451 H375.500 V480.300 H368 Z"/><path fill-rule="evenodd" d="M368.200 501.500 A26.800 24.500 0 1 0 421.800 501.500 A26.800 24.500 0 1 0 368.200 501.500 Z M374.500 501.800 A20.500 14.800 0 1 0 415.500 501.800 A20.500 14.800 0 1 0 374.500 501.800 Z"/><path d="M369.400 563 V552 C369.400 538 381 529.300 395.500 529.300 C411 529.300 421.500 538 421.500 552 C421.500 560 418 566 412 571.500 L407.500 567 C412 563 415.400 558 415.400 552 C415.400 544 407 538.600 395.500 538.600 C384 538.600 375.500 545 375.500 552 C375.500 556 376.500 560 378.500 563 Z"/><rect x="349" y="563.200" width="46" height="11.600"/><path d="M368.200 577.300 L417 588.400 L420.800 594 V603 L415.700 608 L368.200 618.800 V607.500 L413.800 596.300 L368.200 583.300 Z"/><rect x="384.400" y="585" width="6.300" height="17"/><path d="M369 622 H420.500 V637 L391 655 H420 V662.800 H369 V654.500 L410.500 628.400 H369 Z"/></g><circle cx="772.500" cy="199.200" r="14.300" fill="none" stroke="#f4c00a" stroke-width="3.300"/><path d="M772.500 176.700 L775.800 195.900 L791.700 199.200 L775.800 202.500 L772.500 219.700 L769.200 202.500 L753.300 199.200 L769.200 195.900 Z" fill="#8e5443"/><text x="776" y="193.800" font-family="Liberation Serif" font-weight="bold" font-size="19" fill="#111" textLength="15" lengthAdjust="spacingAndGlyphs">N</text><rect x="768" y="244" width="9" height="128" fill="#fde9a4" stroke="#d8925a" stroke-width="1.200"/><rect x="769.500" y="245" width="2" height="126" fill="#fbd6c8"/><circle cx="772.500" cy="236.500" r="9" fill="#fde6a0" stroke="#c97a4a" stroke-width="1.300"/><path d="M765.500 236.500h14M772.500 229.500v14" stroke="#000" stroke-width="1.300"/><circle cx="772.500" cy="379.300" r="9" fill="#fde6a0" stroke="#c97a4a" stroke-width="1.300"/><path d="M765.500 379.500h14" stroke="#000" stroke-width="1.500"/><rect x="760.500" y="313.500" width="23" height="14" fill="#fdeb9a" stroke="#c87038" stroke-width="1"/><rect x="763" y="316" width="18" height="9" fill="#b3b66e"/></svg><svg class="a" style="left:827px;top:161px" width="22" height="21" viewBox="0 0 22 21"><rect x="1.7" y="1.2" width="7.600" height="7.600" rx="2" fill="#fff" stroke="#6aa2e6" stroke-width="1.400"/><path d="M5.5 2.7v4.600M3.2 5.0h4.600" stroke="#000" stroke-width="1.500"/><rect x="1.7" y="12.7" width="7.600" height="7.600" rx="2" fill="#fff" stroke="#6aa2e6" stroke-width="1.400"/><path d="M5.5 14.2v4.600M3.2 16.5h4.600" stroke="#000" stroke-width="1.500"/><rect x="12.2" y="7.2" width="7.600" height="7.600" rx="2" fill="#fff" stroke="#6aa2e6" stroke-width="1.400"/><path d="M16.0 8.7v4.600M13.7 11.0h4.600" stroke="#000" stroke-width="1.500"/><path d="M10.500 3h4.500M10.500 17.500h4.500" stroke="#555" stroke-width="1.500"/></svg><svg class="a" style="left:859px;top:161px" width="22" height="21" viewBox="0 0 22 21"><rect x="1.7" y="1.2" width="7.600" height="7.600" rx="2" fill="#000" stroke="#3a78d0" stroke-width="1.400"/><path d="M5.5 2.7v4.600M3.2 5.0h4.600" stroke="#fff" stroke-width="1.500"/><rect x="1.7" y="12.7" width="7.600" height="7.600" rx="2" fill="#000" stroke="#3a78d0" stroke-width="1.400"/><path d="M5.5 14.2v4.600M3.2 16.5h4.600" stroke="#fff" stroke-width="1.500"/><rect x="12.2" y="7.2" width="7.600" height="7.600" rx="2" fill="#000" stroke="#3a78d0" stroke-width="1.400"/><path d="M16.0 8.7v4.600M13.7 11.0h4.600" stroke="#fff" stroke-width="1.500"/><path d="M10.500 3h4.500M10.500 17.500h4.500" stroke="#555" stroke-width="1.500"/></svg><svg class="a" style="left:893px;top:160px" width="19" height="22" viewBox="0 0 19 22"><defs><linearGradient id="lk" x1="0" y1="0" x2="0.600" y2="1"><stop offset="0" stop-color="#fde650"/><stop offset="1" stop-color="#f0a020"/></linearGradient></defs><path d="M4.200 9V6.800a5.300 4.800 0 0 1 10.600 0V9" fill="none" stroke="#a0a0a0" stroke-width="2.200"/><rect x="1.500" y="9" width="16" height="12" fill="url(#lk)" stroke="#e39030" stroke-width="1"/></svg><svg class="a" style="left:923px;top:160px" width="19" height="22" viewBox="0 0 19 22"><path d="M4.200 9V6.800a5.300 4.800 0 0 1 10.600 0V9" fill="none" stroke="#a0a0a0" stroke-width="2.200"/><rect x="1.500" y="9" width="16" height="12" fill="#fff" stroke="#000" stroke-width="1.400"/><path d="M2 9.500l15 11M17 9.500l-15 11" stroke="#000" stroke-width="1.200"/></svg><svg class="a" style="left:951px;top:160px" width="21" height="22" viewBox="0 0 21 22"><path d="M8 9V6.800a5.300 4.800 0 0 1 10.600 0V8" fill="none" stroke="#a0a0a0" stroke-width="2.200"/><rect x="1.500" y="9" width="16" height="12" fill="url(#lk)" stroke="#e39030" stroke-width="1"/></svg><div class="a" style="left:818px;top:183px;width:315px;height:1px;background:#c6c6c6"></div><div class="a" style="left:818px;top:183px;width:316px;height:311px;background:#fff;border:1px solid #bdbdbd;border-left:none;border-bottom:2px solid #c4c4c4"></div><div class="a" style="left:819px;top:218px;width:313px;height:34px;background:#f3f4f4"></div><div class="a" style="left:819px;top:286px;width:313px;height:34px;background:#f3f4f4"></div><div class="a" style="left:819px;top:354px;width:313px;height:34px;background:#f3f4f4"></div><div class="a" style="left:819px;top:422px;width:313px;height:34px;background:#f3f4f4"></div><svg class="a" style="left:827px;top:196px" width="9" height="10" viewBox="0 0 9 10"><path d="M1 0.500 L8.500 5 L1 9.500z" fill="#7c7c7c"/></svg><div class="t" style="left:838px;top:194px;font-size:11.5px;color:#1a1a1a">1</div><div class="t" style="left:906px;top:194px;font-size:11.5px;letter-spacing:0.06px;color:#1a1a1a">Placement Tackdown</div><div class="a" style="left:866px;top:184px;width:32px;height:33px;background:#fff"></div><svg class="a" style="left:827px;top:230px" width="9" height="10" viewBox="0 0 9 10"><path d="M1 0.500 L8.500 5 L1 9.500z" fill="#7c7c7c"/></svg><div class="t" style="left:838px;top:228px;font-size:11.5px;color:#1a1a1a">2</div><div class="t" style="left:906px;top:228px;font-size:11.5px;letter-spacing:0.06px;color:#1a1a1a">Star of Life</div><div class="a" style="left:866px;top:218px;width:32px;height:33px;background:#fff"></div><div class="t" style="left:838px;top:262px;font-size:11.5px;color:#1a1a1a">3</div><div class="t" style="left:906px;top:262px;font-size:11.5px;letter-spacing:0.06px;color:#1a1a1a">Letters</div><div class="a" style="left:866px;top:252px;width:32px;height:33px;background:#fff"></div><svg class="a" style="left:827px;top:298px" width="9" height="10" viewBox="0 0 9 10"><path d="M1 0.500 L8.500 5 L1 9.500z" fill="#7c7c7c"/></svg><div class="t" style="left:838px;top:296px;font-size:11.5px;color:#1a1a1a">4</div><div class="t" style="left:906px;top:296px;font-size:11.5px;letter-spacing:0.06px;color:#1a1a1a">Design</div><div class="a" style="left:866px;top:286px;width:32px;height:33px;background:#fff"></div><svg class="a" style="left:866px;top:184px" width="32" height="34" viewBox="0 0 32 34"><path d="M11.800 5.500 L14 2.500 H18 L20.200 5.500 V30.500 L18.500 32.300 H13.500 L11.800 30.500 Z" fill="none" stroke="#f5c26b" stroke-width="1.200"/></svg><svg class="a" style="left:866px;top:218px" width="32" height="34" viewBox="0 0 32 34"><path d="M3 9 L6 4 L10 3 L13 1.500 L19 1.500 L22 3 L26 4 L29 9 L31 11 L31.500 20 L30 24 L27 29 L22 31 L19 32.500 H13 L10 31 L5 29 L2 24 L0.800 20 V12 Z" fill="#0a2a62"/><path d="M5 17 L9 15.500 L13 16.500 L17 15 L21 16 L25 14.500 L28 16 L27 19 L22 18.500 L17 19.500 L12 19 L8 19.500 L5 19 Z" fill="#cfe0ee"/></svg><svg class="a" style="left:866px;top:252px" width="32" height="34" viewBox="0 0 32 34"><g fill="#e0503a"><rect x="10.500" y="1" width="8.500" height="2.600"/><rect x="10.500" y="1" width="1.500" height="6"/><path fill-rule="evenodd" d="M10.500 10 a4.300 3.500 0 1 0 8.600 0 a4.300 3.500 0 1 0 -8.600 0z M12.300 10 a2.500 1.800 0 1 0 5 0 a2.500 1.800 0 1 0 -5 0z"/><path d="M10.500 18.500 V16 q0-2.800 4.300-2.800 t4.300 2.800 l-1.500 2 l-0.500-1 q1-2-2.300-2 t-2.600 2.500 z"/><rect x="7.500" y="17.200" width="5.500" height="1.600"/><path d="M10.500 19.500 L19 21.800 V23.200 L10.500 26 V24.500 L16 22.500 L10.500 21 Z"/><path d="M10.500 27 H19 V28.500 L14 31 H19 V32.500 H10.500 V31 L15.500 28.500 H10.500 Z"/></g></svg><svg class="a" style="left:866px;top:286px" width="32" height="34" viewBox="0 0 32 34"><path d="M11.800 5.500 L14 2.500 H18 L20.200 5.500 V30.500 L18.500 32.300 H13.500 L11.800 30.500 Z" fill="none" stroke="#0a2a66" stroke-width="1.500"/></svg><div class="a" style="left:818px;top:494px;width:315px;height:10px;background:#fdfdfd;border-bottom:1px solid #cfcfcf"></div><div class="a" style="left:972px;top:495px;width:6px;height:6px;border-radius:50%;background:#d2d2d2"></div><div class="a" style="left:826px;top:516px;width:300px;height:305px;background:#e3e3e3;border:1px solid #dadada;border-radius:5px"></div><div class="a" style="left:950px;top:508px;width:51px;height:18px;border-radius:4px;background:linear-gradient(#4b95f8,#1f6ff0);box-shadow:0 0.500px 1px rgba(0,0,0,0.3)"></div><div class="t" style="left:950px;top:510px;width:51px;text-align:center;font-size:12px;color:#fff">Color</div><div class="pbtn" style="left:845px;top:536px;width:73px">Thread</div><div class="pbtn" style="left:930px;top:535px;width:73px">1 Color...</div><div class="pbtn" style="left:1013px;top:536px;width:73px">Preferred</div><div class="t" style="left:859px;top:560px;font-size:11.5px;letter-spacing:0.16px;color:#222">Click below to change individual colors.</div><div class="a" style="left:839px;top:581px;width:273px;height:227px;background:#fff;border:1px solid #c4c4c4"></div><div class="a" style="left:1101px;top:582px;width:10px;height:225px;background:#fafafa;border-left:1px solid #e6e6e6"></div><div class="a" style="left:1103px;top:585px;width:7px;height:216px;border-radius:3.500px;background:#c4c4c4"></div><div class="a" style="left:840px;top:582px;width:75px;height:37px;background:#fddda2"></div><div class="a" style="left:840px;top:619px;width:261px;height:1px;background:#c8c8c8"></div><div class="t" style="left:919px;top:584px;font-size:10px;letter-spacing:0.3px;line-height:13px;color:#1a1a1a">1: Applique Position<br></div><div class="a" style="left:840px;top:620px;width:75px;height:37px;background:#fdd17c"></div><div class="a" style="left:840px;top:657px;width:261px;height:1px;background:#c8c8c8"></div><div class="t" style="left:919px;top:622px;font-size:10px;letter-spacing:0.3px;line-height:13px;color:#1a1a1a">2: Applique Material<br></div><div class="a" style="left:840px;top:658px;width:75px;height:37px;background:#01285f"></div><div class="a" style="left:840px;top:695px;width:261px;height:1px;background:#c8c8c8"></div><div class="t" style="left:919px;top:660px;font-size:10px;letter-spacing:0.3px;line-height:13px;color:#1a1a1a">3: Mettler PolySheen<br>3344</div><div class="a" style="left:840px;top:696px;width:75px;height:37px;background:#ddebf3"></div><div class="a" style="left:840px;top:733px;width:261px;height:1px;background:#c8c8c8"></div><div class="t" style="left:919px;top:698px;font-size:10px;letter-spacing:0.3px;line-height:13px;color:#1a1a1a">4: Mettler PolySheen<br>3350</div><div class="a" style="left:840px;top:734px;width:75px;height:37px;background:#e55b45"></div><div class="a" style="left:840px;top:771px;width:261px;height:1px;background:#c8c8c8"></div><div class="t" style="left:919px;top:736px;font-size:10px;letter-spacing:0.3px;line-height:13px;color:#1a1a1a">5: Mettler PolySheen<br>1600</div><div class="a" style="left:840px;top:772px;width:75px;height:35px;background:#01285f"></div><div class="t" style="left:919px;top:774px;font-size:10px;letter-spacing:0.3px;line-height:13px;color:#1a1a1a">6: Mettler PolySheen<br>3344</div><div class="t" style="left:20px;top:840px;font-size:13.5px;color:#2a2a2a;word-spacing:0px">Zoom: 83%&nbsp; Cursor: 1 (1/4)" x -2(5/16)"</div><div class="t" style="left:476px;top:840px;font-size:13.5px;color:#2a2a2a">Hoop: 5 (1/8) x 7 (1/16)</div><div class="t" style="left:659px;top:840px;font-size:13.5px;letter-spacing:0.18px;color:#111">1 (7/8)" x 6 (3/4)"</div><div class="t" style="left:872px;top:840px;font-size:13.5px;letter-spacing:0.18px;color:#111">Stitches:4976</div><div class="t" style="left:992px;top:840px;font-size:13.5px;color:#2a2a2a">Ndls/Cols: 5/6</div><svg class="a" style="left:0;top:0" width="1146" height="868" viewBox="0 0 1146 868"><defs><filter id="sh" x="-10%" y="-50%" width="120%" height="200%"><feGaussianBlur in="SourceAlpha" stdDeviation="1.500"/><feOffset dx="1.200" dy="2.800" result="b"/><feComponentTransfer><feFuncA type="linear" slope="0.6"/></feComponentTransfer><feMerge><feMergeNode/><feMergeNode in="SourceGraphic"/></feMerge></filter></defs>
<g transform="translate(452.8,325.4) rotate(-13.586)" filter="url(#sh)"><path d="M0 -4.8 L356.31 -5.2 L350.81 -16.800 L379.31 0 L350.81 16.800 L356.31 5.2 L0 4.8 A4.8 4.8 0 0 1 0 -4.8 Z" fill="#f4447e"/></g></svg></body></html>
